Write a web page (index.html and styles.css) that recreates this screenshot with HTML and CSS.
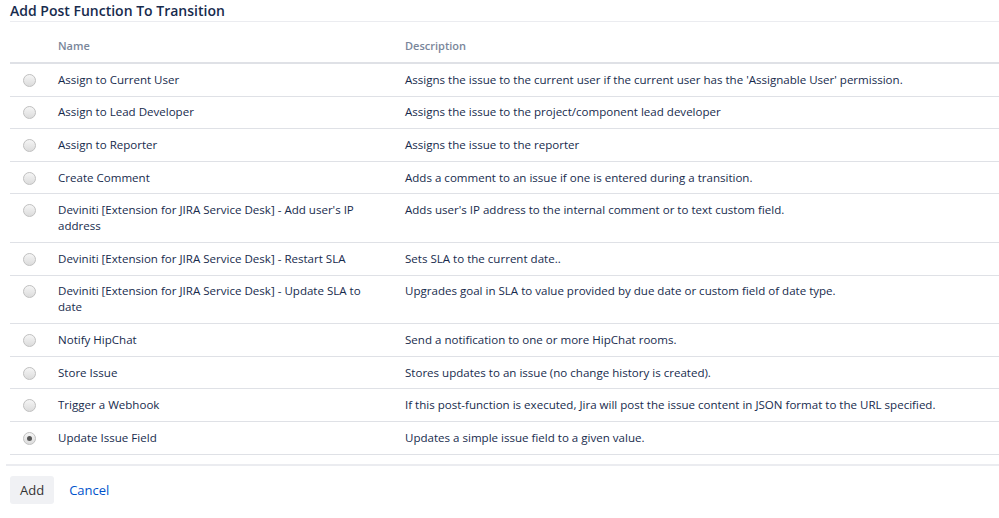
FILE: index.html
```html
<!DOCTYPE html>
<html>
<head>
<meta charset="utf-8">
<link rel="stylesheet" href="styles.css">
</head>
<body>
<div class="page">
  <h2 class="title">Add Post Function To Transition</h2>
  <table class="functions">
    <thead>
      <tr><th class="sel"></th><th class="name">Name</th><th class="desc">Description</th></tr>
    </thead>
    <tbody>
      <tr><td class="sel"><span class="radio"></span></td><td class="name">Assign to Current User</td><td class="desc">Assigns the issue to the current user if the current user has the 'Assignable User' permission.</td></tr>
      <tr><td class="sel"><span class="radio"></span></td><td class="name">Assign to Lead Developer</td><td class="desc">Assigns the issue to the project/component lead developer</td></tr>
      <tr><td class="sel"><span class="radio"></span></td><td class="name">Assign to Reporter</td><td class="desc">Assigns the issue to the reporter</td></tr>
      <tr><td class="sel"><span class="radio"></span></td><td class="name">Create Comment</td><td class="desc">Adds a comment to an issue if one is entered during a transition.</td></tr>
      <tr><td class="sel"><span class="radio"></span></td><td class="name">Deviniti [Extension for JIRA Service Desk] - Add user's IP address</td><td class="desc">Adds user's IP address to the internal comment or to text custom field.</td></tr>
      <tr><td class="sel"><span class="radio"></span></td><td class="name">Deviniti [Extension for JIRA Service Desk] - Restart SLA</td><td class="desc">Sets SLA to the current date..</td></tr>
      <tr><td class="sel"><span class="radio"></span></td><td class="name">Deviniti [Extension for JIRA Service Desk] - Update SLA to date</td><td class="desc">Upgrades goal in SLA to value provided by due date or custom field of date type.</td></tr>
      <tr><td class="sel"><span class="radio"></span></td><td class="name">Notify HipChat</td><td class="desc">Send a notification to one or more HipChat rooms.</td></tr>
      <tr><td class="sel"><span class="radio"></span></td><td class="name">Store Issue</td><td class="desc">Stores updates to an issue (no change history is created).</td></tr>
      <tr><td class="sel"><span class="radio"></span></td><td class="name">Trigger a Webhook</td><td class="desc">If this post-function is executed, Jira will post the issue content in JSON format to the URL specified.</td></tr>
      <tr><td class="sel"><span class="radio checked"></span></td><td class="name">Update Issue Field</td><td class="desc">Updates a simple issue field to a given value.</td></tr>
    </tbody>
  </table>
  <div class="actions">
    <button class="btn">Add</button>
    <a class="cancel">Cancel</a>
  </div>
</div>
</body>
</html>
```

FILE: styles.css
```css
html, body {
  margin: 0;
  padding: 0;
  background: #fff;
}
body {
  font-family: "Open Sans", "Noto Sans", sans-serif;
  color: #172b4d;
  font-size: 11.55px;
}
.page {
  padding: 0 0 0 6px;
}
.title {
  margin: 0 0 0 4px;
  padding: 3px 0 2px 0;
  font-size: 14px;
  font-weight: 600;
  line-height: 16px;
  color: #172b4d;
  border-bottom: 1px solid #ebecf0;
}
.functions {
  margin-left: 4px;
  width: calc(100% - 4px);
  border-collapse: collapse;
}
.functions th {
  text-align: left;
  font-size: 11px;
  font-weight: 600;
  color: #7a869a;
  line-height: 16px;
  padding: 16px 10px 8px 10px;
  border-bottom: 2px solid #dfe1e6;
}
.functions td {
  line-height: 16px;
  padding: 7.8px 10px;
  border-bottom: 1px solid #dfe1e6;
  vertical-align: top;
}
.functions .sel {
  width: 18px;
  padding-left: 10px;
  padding-right: 10px;
}
.functions .name {
  width: 327px;
}
.radio {
  display: block;
  width: 11px;
  height: 11px;
  margin: 2px 0 0 3px;
  border: 1px solid #c1c1c1;
  border-radius: 50%;
  background: linear-gradient(#f5f5f5, #dcdcdc);
  position: relative;
}
.radio.checked::after {
  content: "";
  position: absolute;
  left: 3px;
  top: 3px;
  width: 5px;
  height: 5px;
  border-radius: 50%;
  background: #555;
}
.actions {
  margin-top: 9px;
  border-top: 2px solid #ebecf0;
  padding-top: 10px;
  display: flex;
  align-items: center;
  gap: 15px;
}
.btn {
  margin-left: 4px;
  font-family: inherit;
  font-size: 13px;
  color: #333;
  background: #f0f1f4;
  border: none;
  border-radius: 3px;
  height: 28px;
  padding: 0 10px;
}
.cancel {
  font-size: 13px;
  color: #0052cc;
  cursor: pointer;
}
```
